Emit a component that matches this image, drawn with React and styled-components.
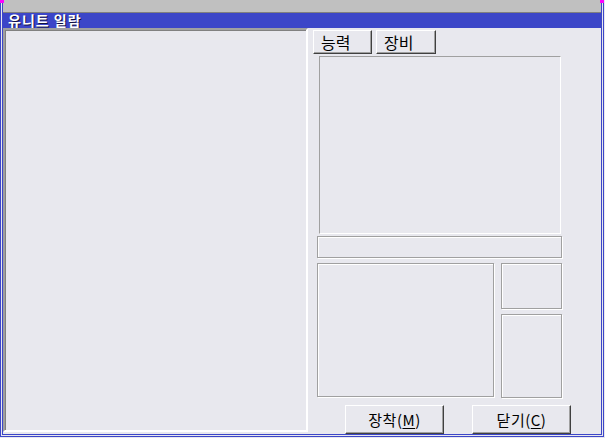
import styled, { createGlobalStyle } from "styled-components";

const GlobalStyle = createGlobalStyle`
    html, body {
        margin: 0;
        padding: 0;
        background: #e8e8ee;
        font-family: "Noto Sans CJK KR", "Noto Sans", sans-serif;
    }
`;

const Window = styled.div`
    position: relative;
    width: 604px;
    height: 437px;
    box-sizing: border-box;
    border: 3px double #3c46c8;
    border-top: none;
    background: #e8e8ee;
    display: flex;
    flex-direction: column;
`;

const Corner = styled.div`
    position: absolute;
    top: 0;
    ${(props) => (props.right ? "right: -3px;" : "left: -3px;")}
    width: 4px;
    height: 3px;
    background: #ff00ff;
`;

const TopStrip = styled.div`
    height: 12px;
    background: #c0c0c0;
    border-bottom: 1px solid #808080;
`;

const TitleBar = styled.div`
    height: 16px;
    background: #3c46c8;
    display: flex;
    align-items: center;
    padding-left: 5px;
    .title {
        color: #fff;
        font-size: 14px;
        font-weight: 700;
        line-height: 1;
        text-shadow: 1px 1px 0 #101040;
        letter-spacing: 1px;
    }
`;

const Body = styled.div`
    flex: 1;
    display: flex;
`;

const ListPanel = styled.div`
    width: 305px;
    height: 404px;
    box-sizing: border-box;
    border-top: 2px solid #a0a0a0;
    border-left: 2px solid #a0a0a0;
    border-bottom: 2px solid #fff;
    border-right: 2px solid #fff;
    box-shadow: inset 1px 1px 0 #808080;
`;

const Side = styled.div`
    flex: 1;
    display: flex;
    flex-direction: column;
    padding-left: 5px;
    padding-top: 2px;
`;

const Tabs = styled.div`
    display: flex;
    gap: 4px;
`;

const RaisedButton = styled.button`
    box-sizing: border-box;
    margin: 0;
    padding: 0;
    background: #e8e8ee;
    border: 1px solid;
    border-color: #fff #404040 #404040 #fff;
    box-shadow: inset -1px -1px 0 #a0a0a0;
    font-family: "Noto Sans CJK KR", "Noto Sans", sans-serif;
    color: #000;
    line-height: 1;
    display: flex;
    align-items: center;
    u {
        text-decoration: underline;
        text-underline-offset: 2px;
    }
`;

const Tab = styled(RaisedButton)`
    width: ${(props) => props.w}px;
    height: 24px;
    font-size: 16px;
    padding-left: 7px;
    padding-bottom: 1px;
`;

const Content = styled.div`
    padding-left: 4px;
    display: flex;
    flex-direction: column;
`;

const SunkenBox = styled.div`
    box-sizing: border-box;
    margin: 2px 0 0 2px;
    width: 242px;
    height: 178px;
    border-top: 1px solid #a0a0a0;
    border-left: 1px solid #a0a0a0;
    border-bottom: 1px solid #fff;
    border-right: 1px solid #fff;
`;

const Etched = styled.div`
    box-sizing: border-box;
    width: ${(props) => props.w}px;
    height: ${(props) => props.h}px;
    margin-top: ${(props) => props.mt || 0}px;
    border: 1px solid #a0a0a0;
    box-shadow: inset 1px 1px 0 #fff, 1px 1px 0 #fff;
`;

const Lower = styled.div`
    display: flex;
    gap: 7px;
    margin-top: 5px;
`;

const SmallCol = styled.div`
    display: flex;
    flex-direction: column;
    gap: 5px;
`;

const Actions = styled.div`
    display: flex;
    gap: 28px;
    margin: 7px 0 0 32px;
`;

const ActionButton = styled(RaisedButton)`
    width: 99px;
    height: 29px;
    font-size: 15px;
    justify-content: center;
    letter-spacing: 0.5px;
`;

export default function App() {
    return (
        <>
            <GlobalStyle />
            <Window>
                <Corner />
                <Corner right />
                <TopStrip />
                <TitleBar>
                    <span className="title">유니트 일람</span>
                </TitleBar>
                <Body>
                    <ListPanel />
                    <Side>
                        <Tabs>
                            <Tab w={59}>능력</Tab>
                            <Tab w={60}>장비</Tab>
                        </Tabs>
                        <Content>
                            <SunkenBox />
                            <Etched w={245} h={22} mt={2} />
                            <Lower>
                                <Etched w={177} h={134} />
                                <SmallCol>
                                    <Etched w={61} h={46} />
                                    <Etched w={61} h={84} />
                                </SmallCol>
                            </Lower>
                        </Content>
                        <Actions>
                            <ActionButton>
                                장착(<u>M</u>)
                            </ActionButton>
                            <ActionButton>
                                닫기(<u>C</u>)
                            </ActionButton>
                        </Actions>
                    </Side>
                </Body>
            </Window>
        </>
    );
}
